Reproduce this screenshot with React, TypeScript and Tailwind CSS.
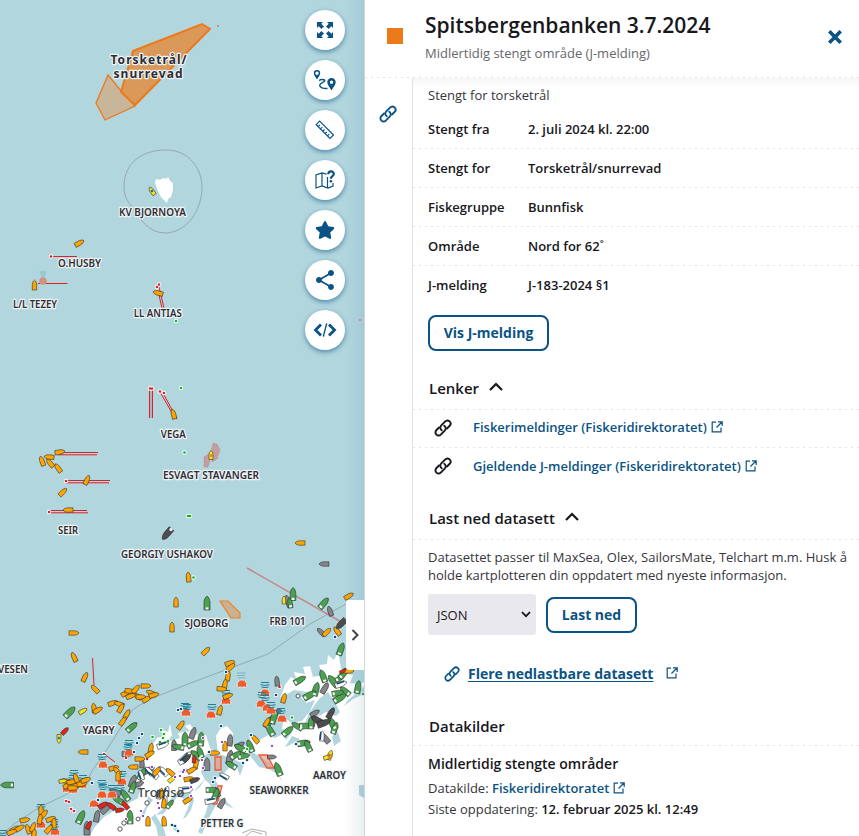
import React from "react";
import { FaStar } from "react-icons/fa";
import { MdShare } from "react-icons/md";

type Ship = [number, number, number, number?];

const ORANGE: Ship[] = [
  [79.5, 243, 60], [34.5, 285, 0, 10], [158, 293, 285], [173.5, 414, 345],
  [60, 452, 80], [42, 461, -20], [49, 457, 275], [50, 463, -40], [58, 468, -35], [87, 480, 25], [63, 492, 45], [68, 510, 270],
  [188.5, 577, -5, 10], [176, 602, 0], [172, 627, 0], [74, 633, 90], [300, 543, 270], [349, 596, 60], [327, 632, 45], [337, 631, -35],
  [74, 657, -25], [85, 677, 25], [95, 689, -45], [94, 708, -8], [98, 710, 60], [113, 703, 70], [119, 704, -70], [121, 708, 30],
  [126, 693, 60], [130, 691, 95], [136, 689, 40], [146, 686, 90], [137, 696, -60], [131, 696, 70], [141, 697, 90], [147, 699, 60], [151, 693, -65], [154, 695, 75],
  [127, 714, 30], [123, 721, 35], [83, 752, 270], [114, 768, 75], [117, 771, -40], [133, 767, 270], [151, 748, 10], [150, 754, 60], [140, 759, 90], [181, 725, 35],
  [118, 776, 0], [148, 821, 0], [164, 821, -5], [65, 781, -80], [68, 785, 60], [72, 782, 80], [76, 778, -20], [78, 785, 70], [82, 784, 85], [86, 780, 70], [73, 788, 90],
  [25, 820, 80], [15, 829, 60], [20, 828, 60], [28, 829, -20], [33, 827, 20], [12, 832, 70], [41, 810, 0], [44, 814, 40], [40, 819, 10], [51, 819, 70], [54, 823, 0], [49, 829, 40], [34, 834, 10],
  [206, 651, 45], [230, 663, 70], [231, 667, 50], [228, 676, 10], [225, 684, 10], [222, 689, 95], [228, 696, 70], [220, 710, 15],
  [284, 698, 15], [267, 722, 30], [255, 739, -40], [225, 746, 0], [215, 753, 90], [196, 764, 10], [192, 770, 60], [189, 779, 80], [161, 793, 10], [164, 803, 5],
  [157, 771, 40], [349, 671, 90], [170, 772, -50], [188, 800, 60],
];
const GREEN: Ship[] = [
  [207, 603, 0, 14], [293, 594, 0, 13], [290, 603, -10, 10], [324, 603, 40, 13], [70, 712, 45, 14], [132, 727, 50, 13], [7, 785, -90, 13], [341, 649, 20, 13],
  [300, 680, 60, 13], [316, 689, 15, 14], [310, 695, 60, 14], [323, 676, -20, 13], [333, 681, -40, 14], [340, 678, 60], [344, 673, 40, 13], [345, 691, -50, 12], [340, 698, 60, 14], [358, 687, 10, 13], [338, 693, 80, 12],
  [269, 722, 30, 13], [274, 717, 20, 14], [270, 730, -30, 13], [288, 731, 50, 13], [297, 726, -60, 12], [306, 726, 90, 13], [311, 723, 0, 12], [332, 723, -30, 14], [335, 728, 20, 12],
  [304, 743, 80, 13], [308, 746, -25, 12], [278, 769, -20, 14], [231, 765, -60, 12], [250, 746, -20, 13], [240, 748, -60, 13], [244, 756, 80, 12], [236, 755, 60, 12], [212, 790, 90, 12], [216, 794, 20, 12],
  [201, 739, 5, 14], [185, 739, 0, 14], [196, 755, -50, 13], [178, 747, -80, 12], [193, 744, 65, 12], [142, 774, 30, 13], [133, 787, 20, 12], [125, 795, -35, 13], [118, 800, -60, 12],
  [81, 817, 25, 14], [130, 817, 0, 14], [170, 804, 40, 10], [200, 752, -20, 12],
];
const GRAY: Ship[] = [
  [324, 564, 270], [288, 601, -20, 12], [330, 611, -20, 10], [321, 632, -45, 10], [277, 681, -5, 10], [128, 754, 90, 12], [142, 763, 0, 10], [133, 781, 20, 13], [149, 770, 65, 12], [115, 792, -65, 12],
  [97, 816, 10, 12], [87, 828, 0, 14], [277, 712, 70], [315, 713, 60, 10], [313, 721, 10, 11], [325, 738, -40, 12], [272, 757, 90, 9], [230, 740, 5, 12], [230, 757, 10, 14], [207, 764, 0, 13], [222, 803, 30, 11], [193, 733, 20, 12], [174, 745, 0, 11], [139, 784, 70, 10], [106, 809, 50, 12], [217, 792, -20, 10], [240, 745, 60, 10], [325, 688, 30, 12],
];
const DARK: Ship[] = [
  [167, 534, 220, 14], [341, 624, 225, 13], [317, 720, -60, 13], [324, 723, 70, 14], [331, 713, 30, 12], [195, 780, 70, 10], [187, 758, 45, 10],
];
const WHITE: Ship[] = [
  [163, 745, 70, 12], [186, 757, 45, 14], [153, 774, -50, 12], [163, 771, -45, 12], [166, 792, 20, 12], [165, 800, 0, 10], [184, 760, 60, 12], [224, 776, -60, 10], [211, 801, 80, 12], [186, 790, 85, 14], [341, 684, 70, 12], [149, 771, -40, 10], [159, 794, 10, 10], [141, 775, -20, 10], [322, 736, 5, 10],
];
const RED: Ship[] = [[65, 731, 45, 9], [103, 805, 60, 10], [111, 806, -55, 10], [125, 805, -40, 10], [120, 810, 80, 9], [89, 825, 30, 9], [343, 671, 60, 7], [194, 759, 0, 8]];
const YELLOW: Ship[] = [[152, 191, -35, 9], [83, 711, 60, 9], [59, 739, 180, 9], [211, 455, 0, 9], [172, 779, 50, 9], [284, 600, 0, 8], [330, 755, 20, 10], [328, 757, 70, 9], [63, 781, 80, 8]];

const LAND =
  "M90 836 L94 828 L104 817 L112 812 L124 806 L138 798 L142 784 L134 781 L140 772 L147 769 L143 761 L149 758 L151 747 L157 738 L164 736 L162 730 L168 732 L170 724 L172 735 L167 742 L180 738 L178 733 L190 731 L185 726 L190 724 L197 735 L206 735 L210 748 L218 754 L216 736 L220 729 L227 726 L233 733 L232 744 L240 746 L252 746 L249 735 L258 741 L268 735 L275 738 L283 734 L286 740 L292 732 L282 729 L283 722 L288 720 L291 723 L302 721 L310 711 L315 700 L306 703 L301 697 L308 692 L294 690 L280 698 L285 685 L291 677 L297 681 L294 672 L305 674 L303 667 L310 666 L313 677 L323 675 L319 665 L327 664 L328 655 L334 660 L338 652 L341 668 L347 674 L353 675 L350 683 L359 684 L364 682 L364 836 Z";
const WATER =
  "M205 756 L209 750 L219 754 L231 758 L244 764 L241 773 L240 776 L237 768 L229 768 L222 775 L215 779 L218 785 L215 796 L226 801 L234 809 L218 801 L210 816 L202 834 L198 832 L206 812 L209 800 L213 794 L210 784 L205 780 L201 772Z M249 750 L259 756 L270 763 L277 771 L283 782 L277 774 L269 769 L259 767 L251 757Z M190 790 L194 800 L191 810 L186 817 L183 819 L188 808 L190 802 L178 796 L170 806 L163 814 L156 815 L166 806 L175 793Z M205 779 L200 787 L193 792 L202 782Z M319 699 L328 692 L335 702 L340 712 L336 716 L326 712 L314 719 L302 731 L309 713Z M337 730 L341 741 L334 746 L332 737Z M292 736 L300 739 L290 745 L285 747Z M348 700 L358 692 L364 686 L364 694 L353 699 L344 706Z M359 785 L364 785 L364 798 L359 795Z M155 814 L164 829 L166 836 L158 836 L156 826 L151 818Z M176 823 L179 834 L173 829Z M148 796 L153 800 L147 808 L144 816 L139 819 L146 806Z M190 770 L185 773 L178 772 L186 768Z";

function Ships({ data, fill }: { data: Ship[]; fill: string }) {
  return (
    <g>
      {data.map(([x, y, r, l = 10], i) => {
        const h = l / 2;
        const w = l * 0.21 + 0.1;
        return (
          <path
            key={i}
            transform={`translate(${x} ${y}) rotate(${r})`}
            d={`M0 ${-h} C${w * 0.7} ${-h * 0.8} ${w} ${-h * 0.4} ${w} 0 V${h} H${-w} V0 C${-w} ${-h * 0.4} ${-w * 0.7} ${-h * 0.8} 0 ${-h}Z`}
            fill={fill}
            stroke="#222"
            strokeOpacity="0.75"
            strokeWidth="0.7"
          />
        );
      })}
    </g>
  );
}

function Sterns({ data }: { data: Ship[] }) {
  return (
    <g fill="#fff">
      {data.map(([x, y, r, l = 10], i) => (
        <rect key={i} transform={`translate(${x} ${y}) rotate(${r})`} x="-1.4" y={l / 2 - 2.6} width="2.8" height="2" />
      ))}
    </g>
  );
}

const BUOYS: number[][] = [
  [67, 789], [73, 790], [103, 765], [122, 782], [102, 795], [112, 795], [94, 804], [129, 753], [186, 713], [41, 825], [55, 832], [82, 785],
  [242, 684], [226, 701], [211, 715], [265, 693], [261, 704], [267, 708], [271, 711], [282, 719],
];
const WAVES: number[][] = [
  [74, 773], [73, 778], [102, 757], [122, 774], [102, 783], [112, 788], [129, 743], [185, 706], [41, 807], [54, 822], [3, 833], [187, 707],
  [226, 693], [212, 707], [265, 685], [262, 695], [271, 705], [281, 711], [120, 788], [103, 787], [128, 747], [54, 827], [83, 778], [265, 698],
];

function Buoys() {
  return (
    <g>
      {BUOYS.map(([x, y], i) => (
        <path key={i} d={`M${x - 4.8} ${y + 3} Q${x - 4.8} ${y - 4} ${x} ${y - 4} Q${x + 4.8} ${y - 4} ${x + 4.8} ${y + 3}Z`} fill="#ef5b2b" stroke="#fff" strokeWidth="0.7" strokeDasharray="3 1" />
      ))}
      {WAVES.map(([x, y], i) => (
        <path key={i} d={`M${x - 4} ${y - 2.5} h8 M${x - 4.5} ${y - 0.3} q4.5 1.5 9 0 M${x - 3.5} ${y + 2} q3.5 1.3 7 0`} fill="none" stroke="#1e7f96" strokeWidth="1" />
      ))}
      <path d="M237 673 h9 M237 675.500 h8 M238 678 h7" stroke="#7ab3c2" strokeWidth="1" />
    </g>
  );
}

function Dots({ pts, fill, r = 1.3 }: { pts: number[][]; fill: string; r?: number }) {
  return (
    <g>
      {pts.map(([x, y], i) => (
        <circle key={`halo${i}`} cx={x} cy={y} r={r + 0.9} fill="#fff" />
      ))}
      {pts.map(([x, y], i) => (
        <circle key={i} cx={x} cy={y} r={r} fill={fill} />
      ))}
    </g>
  );
}

const LABELS: [string, number, number, number][] = [
  ["KV BJORNOYA", 152.5, 216, 67],
  ["O.HUSBY", 79.5, 267, 43],
  ["L/L TEZEY", 35, 308, 44],
  ["LL ANTIAS", 157.7, 316.5, 48],
  ["VEGA", 173.3, 437.5, 25],
  ["ESVAGT STAVANGER", 211, 479, 96],
  ["SEIR", 68, 534, 20],
  ["GEORGIY USHAKOV", 167, 558, 92],
  ["SJOBORG", 206.5, 626.5, 44],
  ["FRB 101", 287.5, 625, 36],
  ["VESEN", 13, 672.5, 30],
  ["YAGRY", 98.5, 734, 32],
  ["AAROY", 329.5, 779, 33],
  ["SEAWORKER", 279, 794, 59],
  ["PETTER G", 222, 826.5, 43],
];

function SeaMap() {
  return (
    <svg className="block h-[836px] w-[364px]" viewBox="0 0 364 836">
      <rect width="364" height="836" fill="#b2d6de" />
      <path d={LAND} fill="#fff" />
      <path d={WATER} fill="#b2d6de" />
      <path d="M155 183 L156 179 L160 180 L163 178 L166 179 L168 177 L170 181 L173 183 L173 190 L171 197 L168 199 L167 203 L164 200 L161 197 L158 191Z" fill="#fff" />
      <path d="M124 187 C124 161 144 150 166 150 C190 150 202 170 202 187 C202 211 186 233 165 233 C149 233 139 218 135 211 C130 204 124 199 124 187Z" fill="none" stroke="#96a9ac" />
      <path d="M0 836 L14 824 L40 807 L63 796 L86 784 L92 771 L104 754 L132 710 L150 699 L188 684 L268 654 L310 624 L346 604" fill="none" stroke="#93aaae" />

      <path d="M108 75 L122 92 L135 106 L105 120 L96 103Z" fill="#ed7a1a" fillOpacity=".35" stroke="#ed7a1a" strokeWidth="1.300" />
      <path d="M133 51 L202 24 L210 29 L135 105 L121 92Z" fill="#ed7a1a" fillOpacity=".68" stroke="#ed7a1a" strokeWidth="2" />
      <path d="M220 601 h8 L240 613 V618 H231Z" fill="#ed7a1a" fillOpacity=".4" stroke="#ee8124" strokeWidth="1.200" />
      <path d="M213 443 l4 1 l3 6 l-3 9 l-5 3 v-7 l-1 -3Z M204 457 l6 -4 l1 4 l-3 10 h-4Z" fill="#c49498" fillOpacity=".85" stroke="#c97e80" strokeWidth=".6" strokeDasharray="2 1" />
      <path d="M259 755 l8 0 l7 13 l-7 0Z M215 757 h6 v13 h-6Z M218 786 l4 0 l-5 18 l-4 0Z" fill="#ef9078" fillOpacity=".6" stroke="#ee5a33" strokeWidth="1.300" />
      <path d="M242 833 l10 -4 l14 3 v4 M246 836 l6 -5 l10 3" fill="none" stroke="#999" strokeWidth=".8" />

      <g stroke="#db2228" strokeWidth="1" fill="none">
        <path d="M51 256.500 H77 M38 283.500 H67.500" />
        <path d="M159 287 L164 308 M158 291 L162 308 M160 392 L175 418 M163 393 L177 419" />
        <path d="M57 452.500 H98 M57 454.800 H97 M66 480.500 H110 M66 482.800 H109 M49 510.500 H87 M49 512.800 H88 M92.500 658 L94 685 M104 754 L115 762" />
        <path d="M149.500 390 V418 M152.500 390 V418" />
        <path d="M151 391 V418" stroke="#b98a90" />
      </g>
      <path d="M247 568 L343 623" stroke="#cb7270" strokeOpacity=".8" fill="none" strokeWidth="1.500" />
      <Dots fill="#db2228" pts={[[51, 256.5], [159, 284.5], [157, 287], [150, 388.5], [152, 388.5], [160, 391.5], [164, 393], [57, 453], [66, 481], [49, 512], [104, 754], [66, 801], [69, 802], [71, 809], [74, 811], [126, 758], [147, 759], [279.5, 687]]} />
      <Dots fill="#12b521" pts={[[176, 321], [181, 388], [184.5, 452.5], [188, 516], [190, 516], [193.5, 577.5], [152.5, 737], [161, 730], [164, 734], [168, 741], [160, 742], [163, 738], [292, 717.5]]} />

      <circle cx="43" cy="281" r="3.800" fill="#cf947f" />
      <path d="M39.500 272 h7 M40.500 274 h5 M41 276 h4" stroke="#69b4c0" strokeWidth=".8" />

      <Ships data={GRAY} fill="#858488" />
      <Ships data={GREEN} fill="#4ca150" />
      <Sterns data={GREEN} />
      <Ships data={WHITE} fill="#fff" />
      <g stroke="#174a6d" strokeWidth="1.600">
        {WHITE.map(([x, y, r], i) => (
          <path key={i} transform={`translate(${x} ${y}) rotate(${r})`} d="M-1.500 -4 V4" />
        ))}
      </g>
      <Buoys />
      <Ships data={ORANGE} fill="#ffa500" />
      <Ships data={DARK} fill="#4d4c50" />
      <Ships data={RED} fill="#e1251b" />
      <Ships data={YELLOW} fill="#f7e31d" />
      <Dots fill="#0c4f86" pts={[[178, 710], [181, 709], [142, 734], [139, 738], [137, 743], [134, 752], [92, 783], [276, 695], [221, 726], [251, 735], [209, 752], [243, 763], [247, 760], [215, 778], [213, 782], [172, 825], [175, 826], [178, 831], [335, 637], [296, 744], [98, 800], [226, 672]]} />
      <Dots r={1.1} fill="#7d17c8" pts={[[222, 742], [203, 768], [202, 760], [175, 777], [180, 776], [184, 770], [191, 787], [191, 796], [152, 767], [158, 803], [159, 808], [141, 811], [143, 816], [126, 819], [272, 746], [203, 738], [183, 772]]} />
      <Dots fill="#12b521" pts={[[247, 749], [363, 694]]} />
      <path d="M218 25 v2 M359 320 h2" stroke="#db4a40" strokeWidth="1" />
      <g fill="#1d75b8">
        <circle cx="152" cy="191" r="1.300" />
        <circle cx="59" cy="738" r="1.300" />
      </g>
      <circle cx="211.500" cy="455.500" r="1.500" fill="#f2802c" />
      <circle cx="329" cy="756" r="1.500" fill="#f2602c" />
      <g fill="#fff" stroke="#444" strokeWidth=".9">
        <circle cx="298" cy="696" r="2" />
        <circle cx="147" cy="803" r="2.200" />
        <circle cx="120" cy="829" r="2.200" />
        <circle cx="124" cy="823" r="2.200" />
        <circle cx="138" cy="819" r="2" />
        <circle cx="171" cy="529.500" r="1.600" stroke="none" />
      </g>

      <g fontFamily="'Noto Sans', sans-serif" fill="#2d2d33" textAnchor="middle" paintOrder="stroke" stroke="#eef3f5" strokeLinejoin="round">
        <g fontSize="10.400" fontWeight="600" strokeWidth="2.500">
          {LABELS.map(([t, x, y, w]) => (
            <text key={t} x={x} y={y} textLength={w} lengthAdjust="spacingAndGlyphs">
              {t}
            </text>
          ))}
        </g>
        <g fontSize="12" fontWeight="700" strokeWidth="2.500">
          <text x="148.500" y="63.500" textLength="76">Torsketrål/</text>
          <text x="148" y="78" textLength="69">snurrevad</text>
        </g>
        <text x="161" y="797" fontSize="13" fontWeight="500" fill="#444" strokeWidth="0" textLength="47">Tromsø</text>
      </g>
    </svg>
  );
}

function ExpandIcon() {
  return (
    <svg className="size-[18px]" viewBox="0 0 18 18" fill="#0b5384">
      <path d="M1 1h6L5.300 2.700 8 5.400 5.400 8 2.700 5.300 1 7Z M17 1h-6l1.700 1.700L10 5.400 12.600 8l2.700-2.700L17 7Z M1 17h6l-1.700-1.700L8 12.600 5.400 10l-2.700 2.700L1 11Z M17 17h-6l1.700-1.700-2.700-2.700L12.600 10l2.700 2.700L17 11Z" />
    </svg>
  );
}

function RouteIcon() {
  return (
    <svg className="h-[23px] w-6" viewBox="0 0 24 23" fill="#0b5384">
      <path fillRule="evenodd" d="M4 1a3.200 3.200 0 0 1 3.200 3.200C7.200 6.300 5 8.500 4 10.500 3 8.500 .8 6.300 .8 4.200A3.200 3.200 0 0 1 4 1Zm0 1.500a1.700 1.700 0 1 0 0 3.400 1.700 1.700 0 0 0 0-3.400Z" />
      <path fillRule="evenodd" d="M18.500 9a4.200 4.200 0 0 1 4.200 4.200c0 3-3 5.500-4.200 8.300-1.200-2.800-4.200-5.300-4.200-8.300A4.200 4.200 0 0 1 18.500 9Zm0 2.600a1.700 1.700 0 1 0 0 3.400 1.700 1.700 0 0 0 0-3.400Z" />
      <path d="M6 11.500c2-1.500 5-1.200 5.700-.3 1 1.600-5 2.600-5 5 0 2.300 3.500 3.500 7.800 3.300" fill="none" stroke="#0b5384" strokeWidth="1.400" />
    </svg>
  );
}

function RulerIcon() {
  return (
    <svg className="size-5" viewBox="0 0 20 20" fill="none" stroke="#0b5384" strokeWidth="1.200">
      <path d="M4.700 1.200 18.500 15 15 18.500 1.200 4.700Z" />
      <path d="M3.200 6.600l1.700-1.700M5.500 8.900l1.700-1.700M7.800 11.200l1.700-1.700M10.100 13.500l1.700-1.700M12.400 15.800l1.700-1.700" />
    </svg>
  );
}

function MapHelpIcon() {
  return (
    <svg className="size-5" viewBox="0 0 20 20" fill="none" stroke="#0b5384">
      <path strokeWidth="1.200" d="M11.500 4.200 7 3 1 5v13l6-2 6 2 5-2v-3M7 3v13M12.500 7v11" />
      <path strokeWidth="2.200" d="M13.300 4.200c0-3.600 5.500-3.600 5.500-.3 0 2.300-3 2-3 4.800" />
      <circle cx="15.900" cy="11.300" r="1.300" fill="#0b5384" stroke="none" />
    </svg>
  );
}

function CodeIcon() {
  return (
    <svg className="h-4 w-6" viewBox="0 0 24 16" fill="none" stroke="#0b5384">
      <path strokeWidth="2.800" d="M8 2.500 2.500 8 8 13.500M16 2.500 21.500 8 16 13.500" />
      <path strokeWidth="1.400" d="M13.700 1.300 10.300 14.700" />
    </svg>
  );
}

function ChainIcon({ className = "" }: { className?: string }) {
  return (
    <svg className={`shrink-0 ${className}`} viewBox="0 0 18 18" fill="none" stroke="currentColor" strokeWidth="1.900" strokeLinecap="round">
      <path d="M7.700 11.200C5.800 9.900 5.900 7.700 7.300 6.300L11 2.600C12.300 1.300 14.300 1.200 15.600 2.400 16.900 3.700 16.800 5.700 15.500 7L13 9.500" />
      <path d="M10.300 6.800C12.200 8.100 12.100 10.300 10.700 11.700L7 15.400C5.700 16.700 3.700 16.800 2.400 15.600 1.100 14.300 1.200 12.300 2.500 11L5 8.500" />
    </svg>
  );
}

function External({ className = "" }: { className?: string }) {
  return (
    <svg className={`size-3 shrink-0 ${className}`} viewBox="0 0 12 12" fill="none" stroke="#0b5384" strokeWidth="1.200">
      <path d="M5 1.200H1.200V10.800H10V6.500M7 .9h4.200V5M11 1 5.500 6.500" />
    </svg>
  );
}

function Chevron() {
  return (
    <svg className="mb-1 h-[9px] w-[14px]" viewBox="0 0 14 9" fill="none" stroke="#17171c" strokeWidth="2.200">
      <path d="M1 8 7 2l6 6" />
    </svg>
  );
}

const Dash = () => <div className="h-px shrink-0 bg-[repeating-linear-gradient(90deg,#e3e3e6_0_2px,transparent_2px_6px)]" />;

const ROWS = [
  ["Stengt fra", "2. juli 2024 kl. 22:00"],
  ["Stengt for", "Torsketrål/snurrevad"],
  ["Fiskegruppe", "Bunnfisk"],
  ["Område", "Nord for 62˚"],
  ["J-melding", "J-183-2024 §1"],
];

const TOOLS = [
  <ExpandIcon />,
  <RouteIcon />,
  <RulerIcon />,
  <MapHelpIcon />,
  <FaStar className="size-5" />,
  <MdShare className="size-6" />,
  <CodeIcon />,
];

function Panel() {
  return (
    <aside className="flex h-[836px] w-[495px] flex-col border-l border-[#d2d5d8] bg-white">
      <header className="flex h-[77px] items-start">
        <div className="mt-7 ml-[22px] size-4 bg-[#ea7b19]" />
        <div className="ml-[22px] flex-1">
          <h1 className="mt-[9px] text-[21px] leading-8 font-semibold">Spitsbergenbanken 3.7.2024</h1>
          <p className="mt-[3px] text-[13px] leading-[18px] text-[#66666c]">Midlertidig stengt område (J-melding)</p>
        </div>
        <svg className="mt-[30px] mr-[17px] size-[14px]" viewBox="0 0 14 14" stroke="#0b5384" strokeWidth="3.600">
          <path d="M1.300 1.300 12.700 12.700M12.700 1.300 1.300 12.700" />
        </svg>
      </header>
      <Dash />
      <div className="flex flex-1">
        <nav className="flex w-[48px] justify-center border-r border-[#e2e2e5] pt-[27px] pr-px text-[#0b5384]">
          <ChainIcon className="size-[18px]" />
        </nav>
        <main className="flex flex-1 flex-col bg-[linear-gradient(#f6f6f6,#fff_10px)] text-[13px]">
          <p className="mt-2 ml-[15px] leading-[18px] text-[#35353b]">Stengt for torsketrål</p>
          <div className="mt-[6px]">
            {ROWS.map(([k, v], i) => (
              <div key={k}>
                {i > 0 && <Dash />}
                <div className="flex h-[38px] items-center pt-[2px] pl-[15px] font-semibold">
                  <span className="w-[100px]">{k}</span>
                  <span>{v}</span>
                </div>
              </div>
            ))}
          </div>
          <button className="mt-[11px] ml-[15px] h-9 w-[121px] shrink-0 rounded-lg border-2 border-[#0b5384] pb-0.5 text-[14px] font-bold text-[#0b5384]">Vis J-melding</button>
          <h2 className="mt-[24px] ml-4 flex h-[26px] items-center gap-[10px] text-[15px] font-semibold">
            Lenker <Chevron />
          </h2>
          <div className="h-2" />
          <Dash />
          <div className="flex h-[37px] items-center pb-0.5 pl-[21px]">
            <ChainIcon className="mr-[21px] size-[18px]" />
            <a className="flex items-center gap-1 font-semibold text-[#0b5384]">
              Fiskerimeldinger (Fiskeridirektoratet) <External className="mb-0.5" />
            </a>
          </div>
          <Dash />
          <div className="flex h-[37px] items-center pl-[21px]">
            <ChainIcon className="mr-[21px] mb-0.5 size-[18px]" />
            <a className="flex items-center gap-1 pt-px font-semibold text-[#0b5384]">
              Gjeldende J-meldinger (Fiskeridirektoratet) <External className="mb-0.5" />
            </a>
          </div>
          <h2 className="mt-[20px] ml-4 flex h-[26px] items-center gap-[10px] text-[15px] font-semibold">
            Last ned datasett <Chevron />
          </h2>
          <div className="h-2" />
          <Dash />
          <p className="mt-[8px] ml-[15px] text-[13px] leading-[18px] whitespace-nowrap text-[#35353b]">
            Datasettet passer til MaxSea, Olex, SailorsMate, Telchart m.m. Husk å
            <br />
            holde kartplotteren din oppdatert med nyeste informasjon.
          </p>
          <div className="mt-[10px] ml-[15px] flex items-center gap-[10px]">
            <div className="flex h-[41px] w-[108px] items-center justify-between rounded-[3px] bg-[#e9e9ed] pr-[5px] pl-[9px]">
              <span className="pt-0.5">JSON</span>
              <svg className="h-[7px] w-[10px]" viewBox="0 0 10 7" fill="none" stroke="#17171c" strokeWidth="1.700">
                <path d="M1 1.200 5 5.200 9 1.200" />
              </svg>
            </div>
            <button className="h-9 w-[91px] rounded-lg border-2 border-[#0b5384] text-[14px] font-bold text-[#0b5384]">Last ned</button>
          </div>
          <a className="mt-[26px] ml-[31px] flex h-6 items-center text-[14px] font-bold text-[#0b5384]">
            <ChainIcon className="mt-0.5 mr-2 size-4" />
            <span className="underline underline-offset-2">Flere nedlastbare datasett</span>
            <External className="ml-[13px]" />
          </a>
          <h2 className="mt-[28px] ml-4 h-[26px] text-[15px] leading-[26px] font-semibold">Datakilder</h2>
          <div className="h-[6px]" />
          <Dash />
          <h3 className="mt-[7px] ml-[15px] h-[23px] text-[14px] leading-[22px] font-semibold">Midlertidig stengte områder</h3>
          <p className="mt-[4px] ml-[15px] flex h-[18px] items-center text-[#35353b]">
            Datakilde:&nbsp;<a className="font-semibold text-[#0b5384]">Fiskeridirektoratet</a>
            <External className="mb-0.5 ml-1" />
          </p>
          <p className="mt-[2px] ml-[15px] leading-[18px] text-[#35353b]">
            Siste oppdatering: <b className="font-semibold text-[#17171c]">12. februar 2025 kl. 12:49</b>
          </p>
        </main>
      </div>
    </aside>
  );
}

export default function App() {
  return (
    <div className="relative flex h-[836px] w-[859px] overflow-hidden bg-white font-['Open_Sans',sans-serif] text-[#17171c]">
      <SeaMap />
      <Panel />
      <div className="absolute top-0 left-[344px] h-full w-5 bg-linear-to-r from-transparent to-[#2b6b881a]" />
      <div className="absolute top-[10px] left-[305px] flex flex-col gap-[10px]">
        {TOOLS.map((icon, i) => (
          <button key={i} className="flex size-10 items-center justify-center rounded-full bg-white text-[#0b5384] shadow-[0_2px_5px_#0b538499]">
            {icon}
          </button>
        ))}
      </div>
      <button className="absolute top-[600px] left-[346px] flex h-[70px] w-[18px] items-center justify-center rounded-l-[3px] bg-white">
        <svg className="h-3 w-2" viewBox="0 0 8 12" fill="none" stroke="#444" strokeWidth="2">
          <path d="M1.500 1 6.500 6l-5 5" />
        </svg>
      </button>
    </div>
  );
}
